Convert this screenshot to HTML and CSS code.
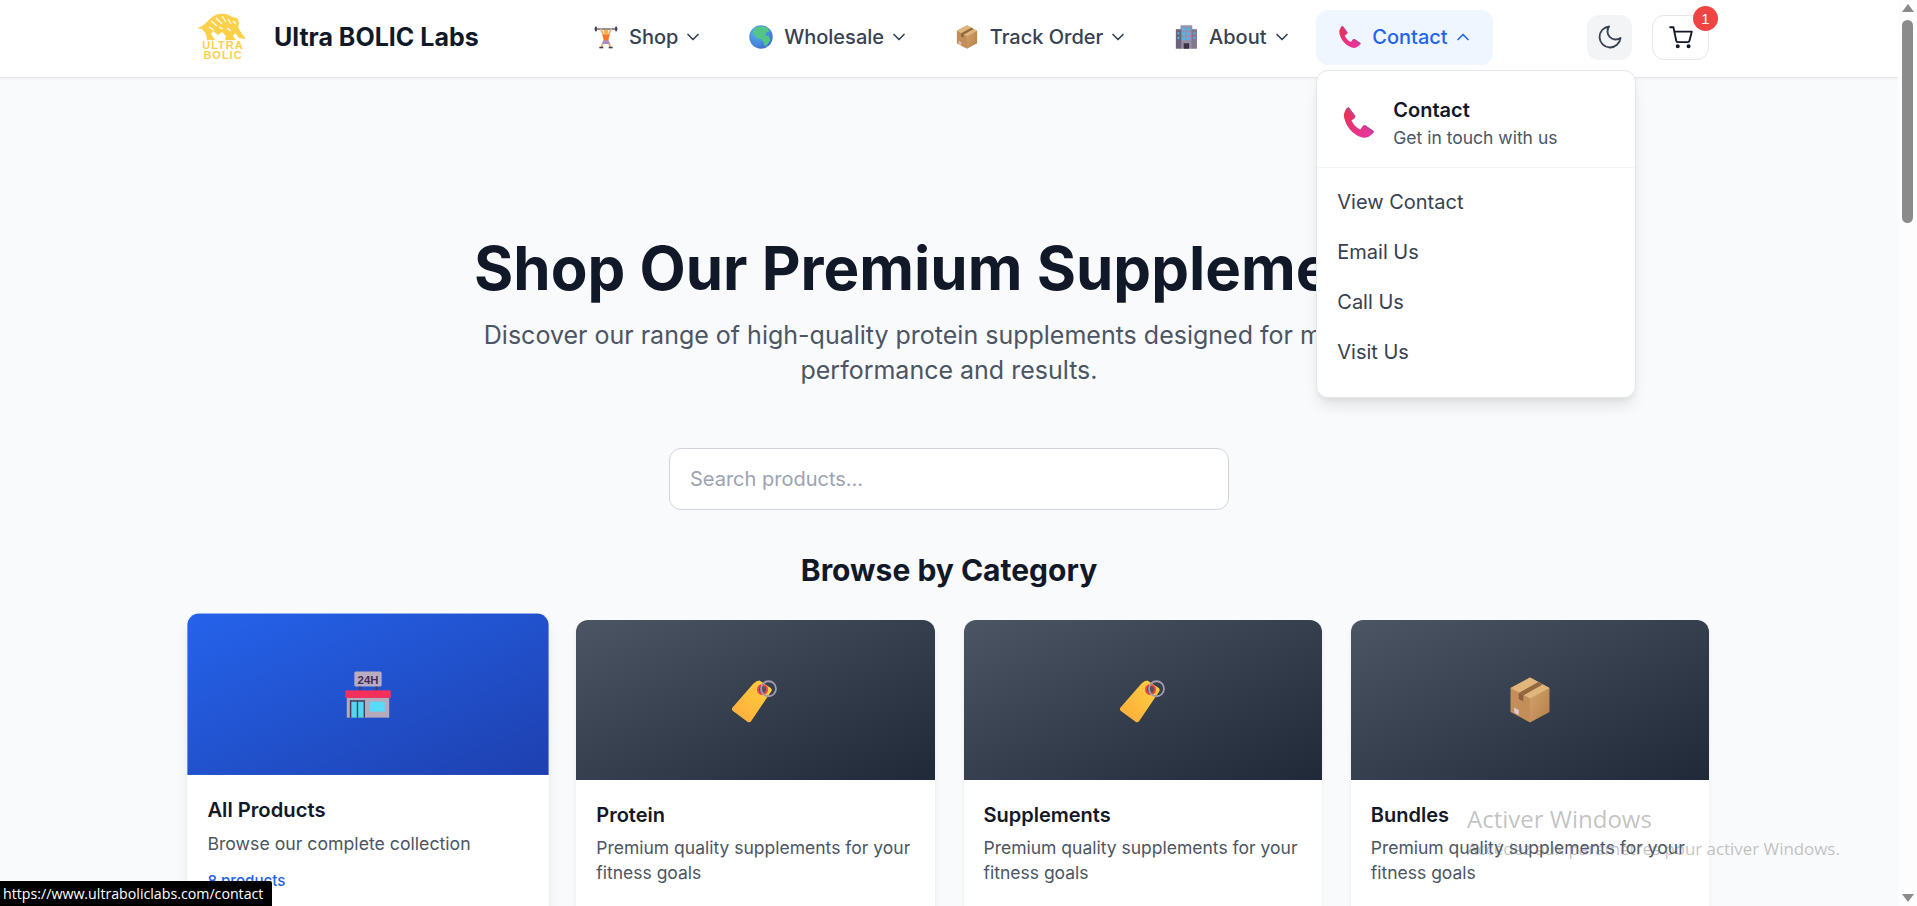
FILE: index.html
```html
<!DOCTYPE html>
<html lang="en">
<head>
    <meta charset="UTF-8">
    <meta name="viewport" content="width=device-width, initial-scale=1.0">
    <title>Ultra BOLIC Labs - Shop</title>
    <link rel="stylesheet" href="styles.css">
</head>
<body>
    <!-- emoji style icons, reused in nav and cards -->
    <svg class="icon-defs" width="0" height="0">
        <defs>
            <linearGradient id="phoneGrad" x1="0" y1="0" x2="1" y2="1">
                <stop offset="0" stop-color="#e8324a"/>
                <stop offset="1" stop-color="#e834ac"/>
            </linearGradient>
            <linearGradient id="tagGrad" x1="1" y1="0" x2="0" y2="1">
                <stop offset="0" stop-color="#fdd23e"/>
                <stop offset="1" stop-color="#ffaa3c"/>
            </linearGradient>
            <linearGradient id="boxSide" x1="0" y1="0" x2="1" y2="1">
                <stop offset="0" stop-color="#d6a86c"/>
                <stop offset="1" stop-color="#b57f4c"/>
            </linearGradient>
            <radialGradient id="globeGrad" cx="0.35" cy="0.3" r="0.9">
                <stop offset="0" stop-color="#55b6f2"/>
                <stop offset="1" stop-color="#3a62c9"/>
            </radialGradient>
        </defs>
        <symbol id="ico-lifter" viewBox="0 0 32 32">
            <rect x="1" y="5" width="30" height="1.6" fill="#4a4a5c"/>
            <rect x="2" y="2.5" width="2.2" height="6.6" rx="1" fill="#3a3a4c"/>
            <rect x="27.8" y="2.5" width="2.2" height="6.6" rx="1" fill="#3a3a4c"/>
            <path d="M8 5.5 L12 15 L14 14 L10.500 5 Z M24 5.500 L20 15 L18 14 L21.500 5 Z" fill="#f0b070"/>
            <circle cx="16" cy="9.500" r="3" fill="#f6b040"/>
            <path d="M11.500 12.500 H20.500 L19 21 H13 Z" fill="#f47a28"/>
            <path d="M12.500 20.500 H19.500 L21.500 25 H10.500 Z" fill="#a58ec8"/>
            <path d="M10.500 24.500 L9 29.500 H11.800 L13 25 Z M21.500 24.500 L23 29.500 H20.200 L19 25 Z" fill="#eab27a"/>
            <rect x="7.500" y="28.500" width="5" height="2" fill="#3a3a4c"/>
            <rect x="19.500" y="28.500" width="5" height="2" fill="#3a3a4c"/>
        </symbol>
        <symbol id="ico-globe" viewBox="0 0 32 32">
            <circle cx="16" cy="16" r="15" fill="url(#globeGrad)"/>
            <path d="M10 3.500 C14 2 20 2 24 4 L27 9 L23 10 L21 14 L26 15 L28 20 L24 26 L21 28 L19 22 L16 19 L10 17 L8 13 L5 11 C6 8 8 5 10 3.500 Z" fill="#53c687"/>
        </symbol>
        <symbol id="ico-box" viewBox="0 0 32 32">
            <path d="M16 1 L29 8 V24 L16 31 Z" fill="url(#boxSide)"/>
            <path d="M16 1 L3 8 V24 L16 31 Z" fill="#c48e5a"/>
            <path d="M16 1 L29 8 L16 15 L3 8 Z" fill="#e0b67c"/>
            <path d="M21.500 4 L24.500 5.600 L11.500 13 L8.500 11.300 Z" fill="#94683f"/>
            <path d="M8.500 11.300 L11.500 13 V17 L8.500 15.300 Z" fill="#8a6039"/>
            <path d="M5.500 21 L8.500 22.600 V26 L5.500 24.400 Z" fill="#dcc8d2"/>
        </symbol>
        <symbol id="ico-building" viewBox="0 0 32 32">
            <rect x="9" y="1" width="15" height="30" fill="#9a90a6"/>
            <rect x="3" y="6" width="7" height="25" fill="#6c6478"/>
            <rect x="23" y="6" width="7" height="25" fill="#807690"/>
            <g fill="#4fb4f0">
                <rect x="11" y="4" width="4" height="4"/><rect x="17" y="4" width="4" height="4"/>
                <rect x="11" y="10" width="4" height="4"/><rect x="17" y="10" width="4" height="4"/>
                <rect x="11" y="16" width="4" height="4"/><rect x="17" y="16" width="4" height="4"/>
                <rect x="5" y="10" width="2.500" height="2.500"/><rect x="5" y="16" width="2.500" height="2.500"/>
                <rect x="25.500" y="10" width="2.500" height="2.500"/><rect x="25.500" y="16" width="2.500" height="2.500"/>
            </g>
            <rect x="13" y="24" width="7" height="7" fill="#3c3444"/>
        </symbol>
        <symbol id="ico-phone" viewBox="0 0 32 32">
            <path d="M3.500 9 C4 7 4.500 5.500 6 3 L8 2 L14 10 L13.500 12 L10.500 14 C11.500 17 15 21 18.500 22.500 L21 19 L23 18.500 L31 24 L30 26 C27.500 28.500 25 30 22 30 C13 29 4 19 3.500 9 Z" fill="url(#phoneGrad)"/>
            <path d="M6 3 L8 2 L14 10 L13.500 12 Z M23 18.500 L31 24 L30 26 L21 19 Z" fill="#b8459a"/>
        </symbol>
        <symbol id="ico-tag" viewBox="0 0 32 32">
            <path d="M19 3 L26.500 8 Q27.500 9 27 10 L13.500 30 Q12.500 31.500 11 30.500 L1.500 23.500 Q0 22.500 1 21 L15 5 Q17 3 19 3 Z" fill="url(#tagGrad)"/>
            <circle cx="21" cy="9" r="3" fill="#55505c" stroke="#f0424c" stroke-width="1.400"/>
            <circle cx="25" cy="8.500" r="5" fill="none" stroke="#a39bb0" stroke-width="1.200"/>
        </symbol>
        <symbol id="ico-chevron-down" viewBox="0 0 24 24">
            <path d="M6 9l6 6 6-6" fill="none" stroke="currentColor" stroke-width="2" stroke-linecap="round" stroke-linejoin="round"/>
        </symbol>
        <symbol id="ico-chevron-up" viewBox="0 0 24 24">
            <path d="M6 15l6-6 6 6" fill="none" stroke="currentColor" stroke-width="2" stroke-linecap="round" stroke-linejoin="round"/>
        </symbol>
    </svg>

    <div class="page">
        <div class="viewport">
            <header class="site-header">
                <a class="brand" href="#">
                    <svg class="brand-logo" viewBox="0 0 68 50">
                        <path d="M8 16 C12 15 15 13 18 10 C22 5 27 2 31 2 C35 1 40 2 43 5 L48 6 L50 11 L49 15 L53 22 L57 27 L50 26 L46 21 L44 24 L47 28 L36 28 L37 24 L33 20 L29 23 L24 19 L22 22 L26 28 L18 28 L17 22 L13 17 Z" fill="#fdd04a"/>
                        <path d="M22 9 L28 14 M27 6 L33 12 M33 4 L37 10 M39 7 L42 12 M44 9 L47 12 M20 15 L25 18 M38 16 L42 19 M30 15 L34 17" stroke="#fff" stroke-width="1.100" fill="none"/>
                        <text x="34" y="36.500" text-anchor="middle" class="logo-text">ULTRA</text>
                        <text x="34" y="46.500" text-anchor="middle" class="logo-text">BOLIC</text>
                    </svg>
                    <span class="brand-name">Ultra BOLIC Labs</span>
                </a>

                <nav class="main-nav">
                    <div class="nav-item">
                        <svg class="nav-emoji"><use href="#ico-lifter"/></svg>
                        <span>Shop</span>
                        <svg class="nav-chevron"><use href="#ico-chevron-down"/></svg>
                    </div>
                    <div class="nav-item">
                        <svg class="nav-emoji"><use href="#ico-globe"/></svg>
                        <span>Wholesale</span>
                        <svg class="nav-chevron"><use href="#ico-chevron-down"/></svg>
                    </div>
                    <div class="nav-item">
                        <svg class="nav-emoji"><use href="#ico-box"/></svg>
                        <span>Track Order</span>
                        <svg class="nav-chevron"><use href="#ico-chevron-down"/></svg>
                    </div>
                    <div class="nav-item">
                        <svg class="nav-emoji"><use href="#ico-building"/></svg>
                        <span>About</span>
                        <svg class="nav-chevron"><use href="#ico-chevron-down"/></svg>
                    </div>
                    <div class="nav-item nav-item-open">
                        <svg class="nav-emoji"><use href="#ico-phone"/></svg>
                        <span>Contact</span>
                        <svg class="nav-chevron"><use href="#ico-chevron-up"/></svg>

                        <div class="dropdown">
                            <div class="dropdown-head">
                                <svg class="dropdown-icon"><use href="#ico-phone"/></svg>
                                <div>
                                    <div class="dropdown-title">Contact</div>
                                    <div class="dropdown-sub">Get in touch with us</div>
                                </div>
                            </div>
                            <ul class="dropdown-list">
                                <li>View Contact</li>
                                <li>Email Us</li>
                                <li>Call Us</li>
                                <li>Visit Us</li>
                            </ul>
                        </div>
                    </div>
                </nav>

                <div class="header-actions">
                    <button class="theme-btn" type="button" aria-label="Toggle theme">
                        <svg width="28" height="28" viewBox="0 0 24 24" fill="none" stroke="#374151" stroke-width="1.600" stroke-linecap="round" stroke-linejoin="round">
                            <path d="M21 12.790A9 9 0 1 1 11.210 3 7 7 0 0 0 21 12.790z"/>
                        </svg>
                    </button>
                    <button class="cart-btn" type="button" aria-label="Cart">
                        <svg width="26" height="26" viewBox="0 0 24 24" fill="none" stroke="#111827" stroke-width="1.700" stroke-linecap="round" stroke-linejoin="round">
                            <circle cx="9" cy="20.500" r="1"/>
                            <circle cx="19" cy="20.500" r="1"/>
                            <path d="M2 3h3l2.600 12.500a1.500 1.500 0 0 0 1.500 1.200h9.200a1.500 1.500 0 0 0 1.500-1.200L22 7H6"/>
                        </svg>
                        <span class="cart-badge">1</span>
                    </button>
                </div>
            </header>

            <main class="content">
                <section class="hero">
                    <h1>Shop Our Premium Supplements</h1>
                    <p>Discover our range of high-quality protein supplements designed for maximum performance and results.</p>
                </section>

                <div class="search-wrap">
                    <input class="search-input" type="text" placeholder="Search products...">
                </div>

                <h2 class="section-title">Browse by Category</h2>

                <div class="category-grid">
                    <div class="category-card category-card-active">
                        <div class="card-banner banner-blue">
                            <svg class="card-emoji" viewBox="0 0 32 32">
                                <rect x="7" y="1" width="18" height="10" rx="1" fill="#b8acc4"/>
                                <text x="16" y="9" text-anchor="middle" class="sign-text">24H</text>
                                <rect x="10" y="11" width="1.200" height="3" fill="#4a3c58"/>
                                <rect x="21" y="11" width="1.200" height="3" fill="#4a3c58"/>
                                <rect x="1" y="13.500" width="30" height="5" fill="#f52f5c"/>
                                <rect x="2" y="18.500" width="28" height="13" fill="#b6abbd"/>
                                <rect x="4" y="20" width="10" height="11.500" fill="#463a5c"/>
                                <rect x="5" y="21" width="3.600" height="10.500" fill="#4fd8f4"/>
                                <rect x="9.500" y="21" width="3.600" height="10.500" fill="#4fd8f4"/>
                                <rect x="17" y="21" width="10" height="6.500" fill="#56dcfa"/>
                            </svg>
                        </div>
                        <div class="card-body">
                            <h3>All Products</h3>
                            <p>Browse our complete collection</p>
                            <div class="card-count">8 products</div>
                        </div>
                    </div>
                    <div class="category-card">
                        <div class="card-banner banner-dark">
                            <svg class="card-emoji"><use href="#ico-tag"/></svg>
                        </div>
                        <div class="card-body">
                            <h3>Protein</h3>
                            <p>Premium quality supplements for your fitness goals</p>
                        </div>
                    </div>
                    <div class="category-card">
                        <div class="card-banner banner-dark">
                            <svg class="card-emoji"><use href="#ico-tag"/></svg>
                        </div>
                        <div class="card-body">
                            <h3>Supplements</h3>
                            <p>Premium quality supplements for your fitness goals</p>
                        </div>
                    </div>
                    <div class="category-card">
                        <div class="card-banner banner-dark">
                            <svg class="card-emoji"><use href="#ico-box"/></svg>
                        </div>
                        <div class="card-body">
                            <h3>Bundles</h3>
                            <p>Premium quality supplements for your fitness goals</p>
                        </div>
                    </div>
                </div>
            </main>
        </div>

        <div class="scrollbar">
            <span class="scroll-arrow scroll-arrow-up"></span>
            <div class="scroll-track"><div class="scroll-thumb"></div></div>
            <span class="scroll-arrow scroll-arrow-down"></span>
        </div>
    </div>

    <div class="link-status">https://www.ultraboliclabs.com/contact</div>

    <div class="win-activate">
        <div class="win-title">Activer Windows</div>
        <div class="win-sub">Accédez aux paramètres pour activer Windows.</div>
    </div>
</body>
</html>
```

FILE: styles.css
```css
* {
    box-sizing: border-box;
}

html, body {
    height: 100%;
}

body {
    margin: 0;
    overflow: hidden;
    position: relative;
    font-family: Inter, "Liberation Sans", sans-serif;
    background-color: #f9fafb;
    color: #111827;
}

.icon-defs {
    position: absolute;
}

.page {
    display: flex;
    height: 906px;
}

.viewport {
    flex: 1;
    min-width: 0;
    overflow: hidden;
}

/* Header */
.site-header {
    display: flex;
    justify-content: space-between;
    align-items: center;
    height: 78px;
    padding: 10px 189px 13px;
    background-color: #ffffff;
    border-bottom: 1px solid #e5e7eb;
    box-shadow: 0 1px 3px rgba(0, 0, 0, 0.05);
    position: relative;
    z-index: 5;
}

.brand {
    display: flex;
    align-items: center;
    gap: 17px;
    text-decoration: none;
    color: #111827;
}

.brand-logo {
    width: 68px;
    height: 50px;
}

.logo-text {
    font-family: "Liberation Sans", Arial, sans-serif;
    font-size: 11px;
    font-weight: 700;
    letter-spacing: 1px;
    fill: #fdd04a;
}

.brand-name {
    font-size: 25px;
    font-weight: 700;
}

.main-nav {
    display: flex;
    gap: 4.750px;
}

.nav-item {
    position: relative;
    display: flex;
    align-items: center;
    height: 55px;
    padding: 0 20px;
    border-radius: 12px;
    font-size: 20px;
    font-weight: 500;
    color: #374151;
}

.nav-item-open {
    background-color: #eff6ff;
    color: #2563eb;
}

.nav-emoji {
    width: 26px;
    height: 26px;
    margin-right: 10px;
    padding: 0.500px;
}

.nav-chevron {
    width: 20px;
    height: 20px;
    margin-left: 5px;
}

.dropdown {
    position: absolute;
    top: 60px;
    left: 0;
    width: 320px;
    height: 328px;
    background-color: #ffffff;
    border: 1px solid #e5e7eb;
    border-radius: 12px;
    box-shadow: 0 10px 15px -3px rgba(0, 0, 0, 0.1), 0 4px 6px -2px rgba(0, 0, 0, 0.05);
    color: #374151;
    font-weight: 400;
}

.dropdown-head {
    display: flex;
    align-items: center;
    gap: 15px;
    height: 97px;
    padding: 8px 20px 0;
    border-bottom: 1px solid #f3f4f6;
}

.dropdown-icon {
    width: 41px;
    height: 41px;
    padding: 3px;
}

.dropdown-title {
    font-size: 20px;
    font-weight: 600;
    line-height: 28px;
    color: #111827;
}

.dropdown-sub {
    margin-top: 1px;
    font-size: 17.500px;
    line-height: 25px;
    color: #4b5563;
}

.dropdown-list {
    list-style: none;
    margin: 0;
    padding: 10px 20px 0;
}

.dropdown-list li {
    padding: 12.500px 0;
    line-height: 25px;
}

.header-actions {
    display: flex;
    align-items: center;
    gap: 20px;
}

.theme-btn,
.cart-btn {
    display: flex;
    align-items: center;
    justify-content: center;
    height: 45px;
    padding: 0;
    border-radius: 12px;
    cursor: pointer;
}

.theme-btn {
    width: 45px;
    border: none;
    background-color: #f3f4f6;
}

.cart-btn {
    position: relative;
    width: 57px;
    border: 1px solid #e5e7eb;
    background-color: #ffffff;
}

.cart-badge {
    position: absolute;
    top: -10px;
    right: -10px;
    width: 25px;
    height: 25px;
    border-radius: 50%;
    background-color: #ef4444;
    color: #ffffff;
    font-size: 15px;
    font-weight: 500;
    line-height: 25px;
    text-align: center;
}

/* Main content */
.content {
    padding: 160px 189px 0;
}

.hero {
    text-align: center;
}

.hero h1 {
    margin: 0;
    font-size: 60px;
    font-weight: 700;
    line-height: 60px;
    color: #111827;
}

.hero p {
    max-width: 1000px;
    margin: 20px auto 0;
    font-size: 25px;
    line-height: 35px;
    color: #4b5563;
}

.search-wrap {
    display: flex;
    justify-content: center;
    margin-top: 60px;
}

.search-input {
    width: 560px;
    height: 62px;
    padding: 0 20px;
    border: 1px solid #d1d5db;
    border-radius: 12px;
    background-color: #ffffff;
    font-family: inherit;
    font-size: 20px;
    color: #111827;
}

.search-input::placeholder {
    color: #9ca3af;
}

.section-title {
    margin: 41px 0 31px;
    font-size: 30px;
    font-weight: 700;
    line-height: 38px;
    text-align: center;
    color: #111827;
}

.category-grid {
    display: grid;
    grid-template-columns: repeat(4, 1fr);
    gap: 29px;
}

.category-card {
    height: 330px;
    background-color: #ffffff;
    border-radius: 12px;
    overflow: hidden;
    box-shadow: 0 4px 6px -1px rgba(0, 0, 0, 0.08), 0 2px 4px -2px rgba(0, 0, 0, 0.05);
}

.category-card-active {
    transform: translateY(-5px) scale(1.01);
    box-shadow: 0 10px 15px -3px rgba(0, 0, 0, 0.1), 0 4px 6px -4px rgba(0, 0, 0, 0.1);
}

.card-banner {
    display: flex;
    align-items: center;
    justify-content: center;
    height: 160px;
}

.banner-blue {
    background: linear-gradient(to bottom right, #2563eb, #1e40af);
}

.banner-dark {
    background: linear-gradient(to bottom right, #4b5563, #1f2937);
}

.card-emoji {
    width: 48px;
    height: 48px;
}

.sign-text {
    font-family: "Liberation Sans", Arial, sans-serif;
    font-size: 7.500px;
    font-weight: 700;
    fill: #3f2f52;
}

.card-body {
    padding: 20px;
}

.card-body h3 {
    margin: 0;
    font-size: 20px;
    font-weight: 600;
    line-height: 30px;
    color: #111827;
}

.card-body p {
    margin: 5px 0 0;
    font-size: 17.500px;
    line-height: 25px;
    color: #4b5563;
}

.card-count {
    margin-top: 12px;
    font-size: 15px;
    line-height: 25px;
    font-weight: 500;
    color: #2563eb;
}

/* Browser chrome painted into the shot */
.scrollbar {
    display: flex;
    flex-direction: column;
    align-items: center;
    width: 19px;
    padding: 4px 0;
    background-color: #fdfdfd;
}

.scroll-track {
    flex: 1;
    width: 100%;
    padding: 8px 0 0 4px;
}

.scroll-thumb {
    width: 11px;
    height: 203px;
    border-radius: 6px;
    background-color: #8b8b8b;
}

.scroll-arrow {
    width: 0;
    height: 0;
    border-left: 6px solid transparent;
    border-right: 6px solid transparent;
}

.scroll-arrow-up {
    border-bottom: 8px solid #8b8b8b;
}

.scroll-arrow-down {
    border-top: 8px solid #8b8b8b;
}

.link-status {
    position: absolute;
    left: 0;
    bottom: 0;
    height: 25px;
    padding: 0 9px 0 3px;
    background-color: #000000;
    color: #ffffff;
    font-family: "Open Sans", "Liberation Sans", sans-serif;
    font-size: 14.200px;
    line-height: 25px;
    border-top-right-radius: 2px;
    z-index: 10;
}

.win-activate {
    position: absolute;
    left: 1467px;
    top: 803px;
    color: rgba(120, 120, 120, 0.45);
    font-family: "Open Sans", "Liberation Sans", sans-serif;
    z-index: 10;
    pointer-events: none;
}

.win-title {
    font-size: 24px;
    line-height: 32px;
}

.win-sub {
    font-size: 16.900px;
    line-height: 24px;
    margin-top: 2px;
}
```
